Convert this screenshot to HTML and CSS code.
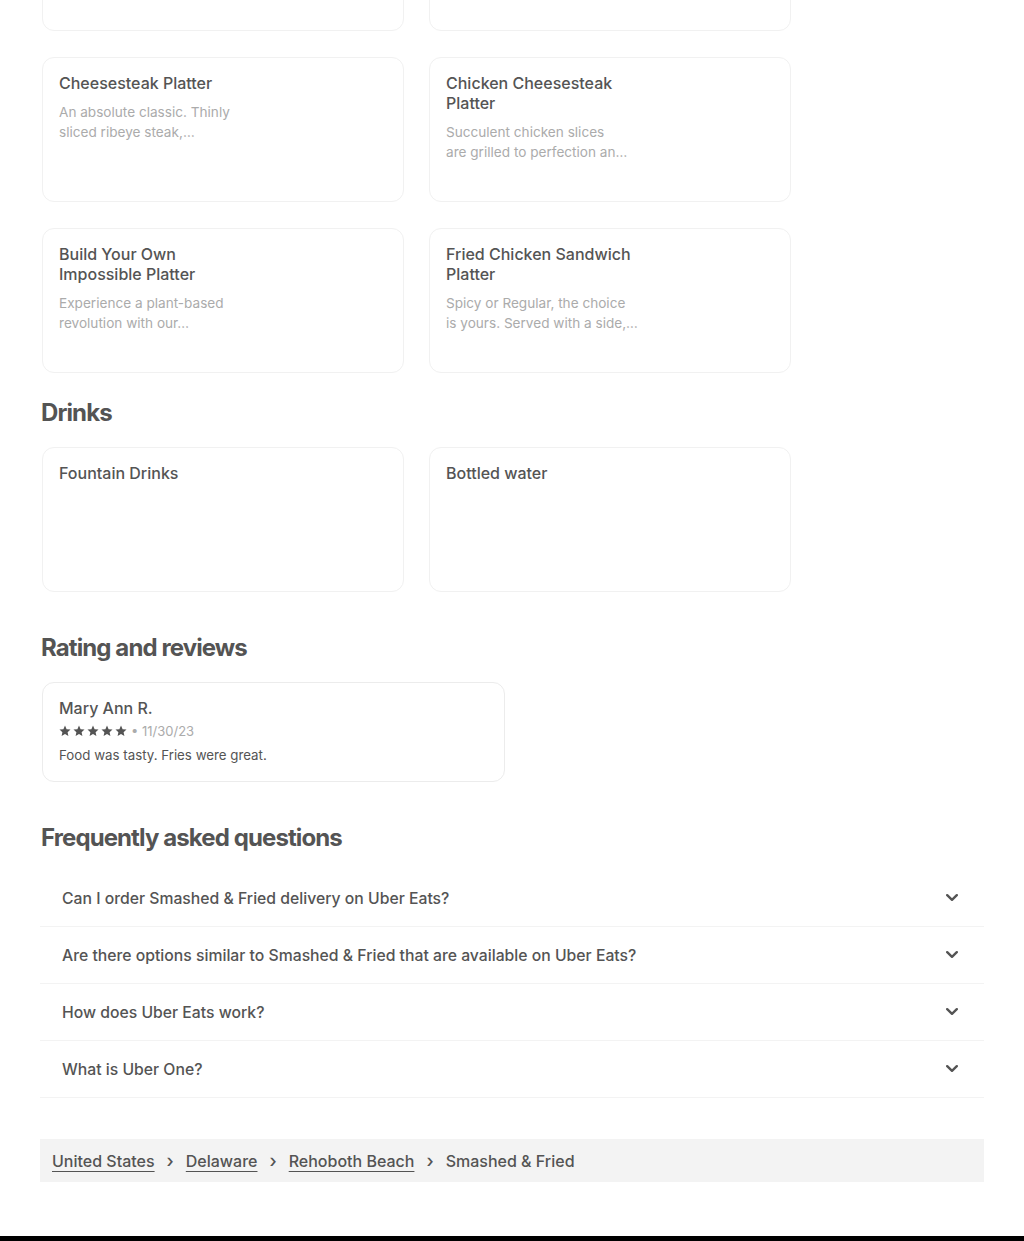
FILE: index.html
```html
<!DOCTYPE html>
<html lang="en">
<head>
<meta charset="utf-8">
<title>Smashed &amp; Fried</title>
<link rel="stylesheet" href="styles.css">
</head>
<body>
<main class="page">
  <section class="menu-section">
    <div class="menu-grid menu-grid--scrolled">
      <div class="item-card"></div>
      <div class="item-card"></div>
      <div class="item-card">
        <div class="item-text">
          <h3 class="item-title">Cheesesteak Platter</h3>
          <p class="item-desc"><span class="desc-line">An absolute classic. Thinly</span> <span class="desc-line">sliced ribeye steak,…</span></p>
        </div>
      </div>
      <div class="item-card">
        <div class="item-text">
          <h3 class="item-title">Chicken Cheesesteak Platter</h3>
          <p class="item-desc"><span class="desc-line">Succulent chicken slices</span> <span class="desc-line">are grilled to perfection an…</span></p>
        </div>
      </div>
      <div class="item-card">
        <div class="item-text">
          <h3 class="item-title">Build Your Own Impossible Platter</h3>
          <p class="item-desc"><span class="desc-line">Experience a plant-based</span> <span class="desc-line">revolution with our…</span></p>
        </div>
      </div>
      <div class="item-card">
        <div class="item-text">
          <h3 class="item-title">Fried Chicken Sandwich Platter</h3>
          <p class="item-desc"><span class="desc-line">Spicy or Regular, the choice</span> <span class="desc-line">is yours. Served with a side,…</span></p>
        </div>
      </div>
    </div>
  </section>

  <section class="menu-section">
    <h2 class="section-title">Drinks</h2>
    <div class="menu-grid">
      <div class="item-card">
        <div class="item-text">
          <h3 class="item-title">Fountain Drinks</h3>
        </div>
      </div>
      <div class="item-card">
        <div class="item-text">
          <h3 class="item-title">Bottled water</h3>
        </div>
      </div>
    </div>
  </section>

  <section class="reviews">
    <h2 class="section-title">Rating and reviews</h2>
    <div class="review-card">
      <div class="review-name">Mary Ann R.</div>
      <div class="review-meta">
        <span class="stars">
          <svg class="star" viewBox="0 0 12 12"><path d="M6 .6l1.6 3.6 3.9.4-2.9 2.6.8 3.9L6 9.1 2.6 11.1l.8-3.9L.5 4.6l3.9-.4z"/></svg>
          <svg class="star" viewBox="0 0 12 12"><path d="M6 .6l1.6 3.6 3.9.4-2.9 2.6.8 3.9L6 9.1 2.6 11.1l.8-3.9L.5 4.6l3.9-.4z"/></svg>
          <svg class="star" viewBox="0 0 12 12"><path d="M6 .6l1.6 3.6 3.9.4-2.9 2.6.8 3.9L6 9.1 2.6 11.1l.8-3.9L.5 4.6l3.9-.4z"/></svg>
          <svg class="star" viewBox="0 0 12 12"><path d="M6 .6l1.6 3.6 3.9.4-2.9 2.6.8 3.9L6 9.1 2.6 11.1l.8-3.9L.5 4.6l3.9-.4z"/></svg>
          <svg class="star" viewBox="0 0 12 12"><path d="M6 .6l1.6 3.6 3.9.4-2.9 2.6.8 3.9L6 9.1 2.6 11.1l.8-3.9L.5 4.6l3.9-.4z"/></svg>
        </span>
        <span class="review-date">• 11/30/23</span>
      </div>
      <p class="review-text">Food was tasty. Fries were great.</p>
    </div>
  </section>

  <section class="faq">
    <h2 class="section-title">Frequently asked questions</h2>
    <ul class="faq-list">
      <li class="faq-row"><span>Can I order Smashed &amp; Fried delivery on Uber Eats?</span><svg class="chevron" viewBox="0 0 12 8"><path d="M1.2 1.2L6 5.8l4.8-4.6" /></svg></li>
      <li class="faq-row"><span>Are there options similar to Smashed &amp; Fried that are available on Uber Eats?</span><svg class="chevron" viewBox="0 0 12 8"><path d="M1.2 1.2L6 5.8l4.8-4.6" /></svg></li>
      <li class="faq-row"><span>How does Uber Eats work?</span><svg class="chevron" viewBox="0 0 12 8"><path d="M1.2 1.2L6 5.8l4.8-4.6" /></svg></li>
      <li class="faq-row"><span>What is Uber One?</span><svg class="chevron" viewBox="0 0 12 8"><path d="M1.2 1.2L6 5.8l4.8-4.6" /></svg></li>
    </ul>
  </section>

  <nav class="breadcrumbs">
    <a href="#" class="crumb-link">United States</a>
    <span class="crumb-sep">›</span>
    <a href="#" class="crumb-link">Delaware</a>
    <span class="crumb-sep">›</span>
    <a href="#" class="crumb-link">Rehoboth Beach</a>
    <span class="crumb-sep">›</span>
    <span class="crumb-current">Smashed &amp; Fried</span>
  </nav>
</main>
<footer class="site-footer"></footer>
</body>
</html>
```

FILE: styles.css
```css
* { box-sizing: border-box; }

body {
  margin: 0;
  background: #fff;
  font-family: Inter, "Noto Sans", sans-serif;
  color: #545454;
}

.page {
  padding: 0 40px;
}

.menu-grid {
  display: grid;
  grid-template-columns: 362px 362px;
  gap: 26px 25px;
  padding-left: 2px;
}

.menu-grid--scrolled {
  margin-top: -114px;
}

.item-card {
  height: 145px;
  border: 1px solid #f1f1f1;
  border-radius: 12px;
  padding: 15px 16px;
  background: #fff;
}

.item-text {
  width: 190px;
}

.item-title {
  margin: 0;
  font-size: 16px;
  line-height: 20px;
  font-weight: 500;
  color: #545454;
}

.item-desc {
  margin: 9px 0 0;
  font-size: 13.6px;
  line-height: 20px;
  color: #ababab;
}

.desc-line {
  display: block;
  white-space: nowrap;
}

.section-title {
  margin: 0 0 0 1px;
  font-size: 24px;
  line-height: 32px;
  font-weight: 700;
  letter-spacing: -0.9px;
  color: #545454;
}

.menu-section + .menu-section {
  margin-top: 24px;
}

.menu-section + .menu-section .section-title {
  margin-bottom: 18px;
}

.reviews {
  margin-top: 40px;
}

.reviews .section-title {
  margin-bottom: 18px;
}

.review-card {
  width: 463px;
  margin-left: 2px;
  border: 1px solid #ececec;
  border-radius: 12px;
  padding: 15px 16px 16px;
}

.review-name {
  font-size: 16px;
  line-height: 20px;
  font-weight: 500;
}

.review-meta {
  display: flex;
  align-items: center;
  gap: 4px;
  margin-top: 5px;
  height: 16px;
}

.stars {
  display: flex;
  gap: 2px;
}

.star {
  width: 12px;
  height: 12px;
  fill: #545454;
}

.review-date {
  font-size: 13px;
  line-height: 16px;
  color: #ababab;
}

.review-text {
  margin: 6px 0 0;
  font-size: 13.3px;
  line-height: 20px;
}

.faq {
  margin-top: 40px;
}

.faq .section-title {
  margin-bottom: 16px;
}

.faq-list {
  list-style: none;
  margin: 0;
  padding: 0;
}

.faq-row {
  display: flex;
  align-items: center;
  justify-content: space-between;
  height: 57px;
  padding: 0 26px 0 22px;
  border-bottom: 1px solid #f3f3f3;
  font-size: 15.75px;
  font-weight: 500;
}

.chevron {
  width: 12px;
  height: 8px;
  fill: none;
  stroke: #545454;
  stroke-width: 2.4;
  stroke-linecap: round;
  stroke-linejoin: round;
}

.breadcrumbs {
  margin-top: 41px;
  height: 43px;
  display: flex;
  align-items: center;
  gap: 12px;
  padding: 0 12px;
  background: #f3f3f3;
  font-size: 16px;
  font-weight: 500;
}

.crumb-link {
  color: #545454;
  text-decoration: underline;
  text-decoration-thickness: 1px;
  text-underline-offset: 4px;
}

.crumb-sep {
  font-size: 18px;
  color: #545454;
}

.crumb-current {
  color: #545454;
}

.site-footer {
  margin-top: 54px;
  height: 200px;
  background: #000;
}
```
